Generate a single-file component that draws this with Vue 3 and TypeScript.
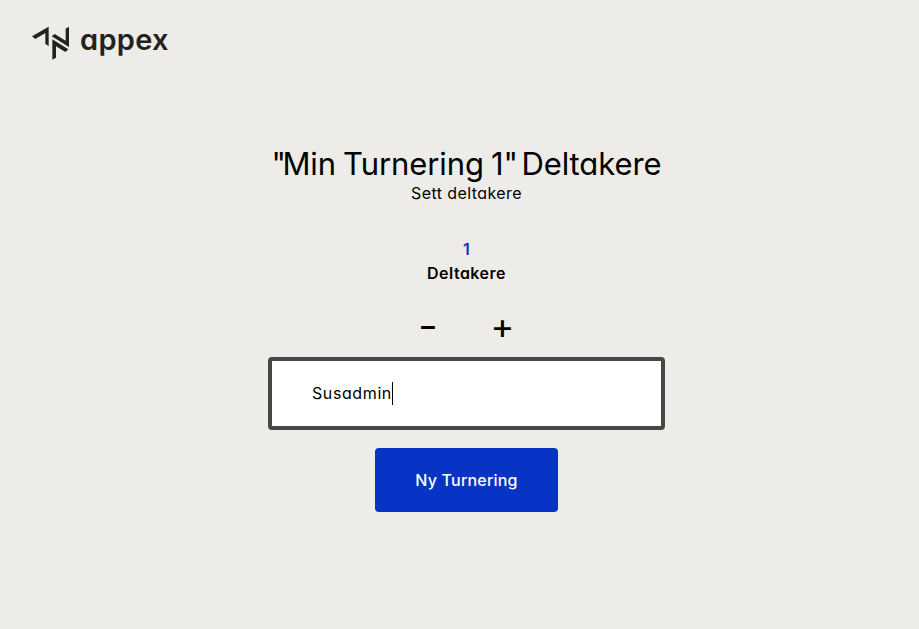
<script setup lang="ts">
import { ref } from 'vue'

const tournament = ref('Min Turnering 1')
const participants = ref<string[]>(['Susadmin'])

function addParticipant() {
  participants.value.push('')
}

function removeParticipant() {
  if (participants.value.length > 1) participants.value.pop()
}
</script>

<template>
  <div class="page">
    <header class="brand">
      <svg class="mark" viewBox="0 0 144 126" aria-hidden="true">
        <path d="M12 43 62 14V72L52 66V33L22 51Z" />
        <path d="M123 14V75L71 43 80 36 113 56V20Z" />
        <path d="M73 52 121 82 112 90 84 73V107L73 113Z" />
      </svg>
      <span class="wordmark">appex</span>
    </header>
    <main class="content">
      <h1><span class="quote">"</span>{{ tournament }}<span class="quote">"</span> Deltakere</h1>
      <p class="subtitle">Sett deltakere</p>
      <div class="count">{{ participants.length }}</div>
      <div class="label">Deltakere</div>
      <div class="stepper">
        <button class="step minus" type="button" @click="removeParticipant"><span class="glyph">-</span></button>
        <button class="step plus" type="button" @click="addParticipant"><span class="glyph">+</span></button>
      </div>
      <div v-for="(name, i) in participants" :key="i" class="field">
        <span class="value">{{ name }}</span><span class="caret"></span>
      </div>
      <button class="submit" type="button">Ny Turnering</button>
    </main>
  </div>
</template>

<style>
body {
  background: #edece8;
}
</style>

<style scoped>
.page {
  box-sizing: border-box;
  height: 629px;
  overflow: hidden;
  background: #edece8;
  color: #000;
  font: 400 16px/24px Inter, "Open Sans", sans-serif;
  font-feature-settings: "cv11";
}
.brand {
  display: flex;
  height: 144px;
  padding: 22px 0 0 28px;
  box-sizing: border-box;
  color: #222;
}
.mark {
  width: 48px;
  height: 42px;
  fill: currentColor;
}
.wordmark {
  margin-left: 4px;
  font-size: 29px;
  font-weight: 600;
  line-height: 35px;
  letter-spacing: 0.3px;
}
.content {
  display: flex;
  flex-direction: column;
  align-items: center;
  width: 397px;
  margin-left: 268px;
}
h1 {
  margin: 0;
  font-size: 31px;
  font-weight: 400;
  line-height: 39px;
  letter-spacing: -0.1px;
  word-spacing: -1.5px;
  white-space: nowrap;
}
.quote {
  letter-spacing: -3.5px;
}
.subtitle {
  margin: -2px 0 0;
  letter-spacing: 0.42px;
}
.count {
  margin-top: 32px;
  color: #0834c6;
  font-weight: 600;
}
.label {
  font-weight: 600;
  letter-spacing: 0.5px;
}
.stepper {
  display: flex;
  gap: 40px;
  height: 72px;
  padding-top: 19px;
  box-sizing: border-box;
}
button {
  border: 0;
  padding: 0;
  background: none;
  color: inherit;
  font: inherit;
  font-feature-settings: inherit;
}
.step {
  width: 34px;
  height: 44px;
  font-size: 36px;
  font-weight: 400;
  line-height: 44px;
}
.glyph {
  display: block;
}
.minus .glyph {
  transform: translateX(-2px) scaleX(1.2);
}
.plus .glyph {
  transform: translateX(-1px);
}
.field {
  display: flex;
  align-items: center;
  box-sizing: border-box;
  width: 397px;
  height: 73px;
  padding-left: 40px;
  border: 4px solid #464644;
  border-radius: 4px;
  background: #fff;
}
.value {
  padding-bottom: 2px;
  letter-spacing: 0.6px;
}
.caret {
  width: 1px;
  height: 23px;
  background: #000;
}
.submit {
  width: 183px;
  height: 64px;
  margin-top: 18px;
  border-radius: 4px;
  background: #0834c6;
  color: #fff;
  font-weight: 500;
  letter-spacing: 0.2px;
}
</style>
